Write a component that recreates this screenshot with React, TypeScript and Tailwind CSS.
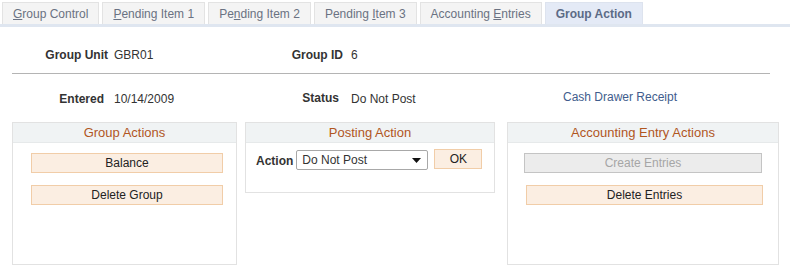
import React from "react";

function Tab({ children, active }: { children: React.ReactNode; active?: boolean }) {
  return (
    <div
      className={
        active
          ? "h-[22px] px-[10px] flex items-center bg-[#e4eaf6] border border-[#dde3ee] border-b-0 text-[#5b6b86] font-bold"
          : "h-[22px] px-[10px] flex items-center bg-[#f4f4f4] border border-[#e3e3e3] border-b-0 text-[#6a7282]"
      }
    >
      {children}
    </div>
  );
}

function Panel({
  title,
  width,
  height,
  children,
}: {
  title: string;
  width: string;
  height: string;
  children?: React.ReactNode;
}) {
  return (
    <div className={`${width} ${height} border border-[#e2e2e2] flex flex-col`}>
      <div className="h-[20px] bg-[#f0f3f4] border-b border-[#e6e9ea] flex items-center justify-center text-[13px] text-[#b1561f]">
        {title}
      </div>
      {children}
    </div>
  );
}

function OrangeButton({ children, className }: { children: React.ReactNode; className: string }) {
  return (
    <div
      className={`${className} h-[20px] bg-[#fbeee2] border border-[#f1cda8] flex items-center justify-center text-[#222]`}
    >
      {children}
    </div>
  );
}

export default function App() {
  return (
    <div className="w-[790px] h-[273px] bg-white font-['Liberation_Sans',Arial,sans-serif] text-[12px] text-[#333] overflow-hidden">
      {/* Tabs */}
      <div className="pt-[2px] pl-[2px] flex gap-[3px] border-b-[3px] border-[#dfe6f0]">
        <Tab>
          <span>
            <span className="underline">G</span>roup Control
          </span>
        </Tab>
        <Tab>
          <span>
            <span className="underline">P</span>ending Item 1
          </span>
        </Tab>
        <Tab>
          <span>
            Pe<span className="underline">n</span>ding Item 2
          </span>
        </Tab>
        <Tab>
          <span>
            Pending <span className="underline">I</span>tem 3
          </span>
        </Tab>
        <Tab>
          <span>
            Accounting <span className="underline">E</span>ntries
          </span>
        </Tab>
        <Tab active>Group Action</Tab>
      </div>

      {/* Header row */}
      <div className="mt-[20px] flex items-center h-[16px]">
        <div className="w-[108px] text-right font-bold">Group Unit</div>
        <div className="ml-[6px] w-[120px]">GBR01</div>
        <div className="w-[109px] text-right font-bold">Group ID</div>
        <div className="ml-[8px]">6</div>
      </div>

      <div className="mt-[10px] ml-[12px] w-[758px] border-t border-[#b4b4b4]" />

      <div className="mt-[17px] flex items-center h-[16px]">
        <div className="w-[104px] text-right font-bold">Entered</div>
        <div className="ml-[10px] w-[120px]">10/14/2009</div>
        <div className="w-[105px] text-right font-bold -mt-[2px]">Status</div>
        <div className="ml-[12px] w-[212px]">Do Not Post</div>
        <div className="text-[#3f5d8d] -mt-[4px]">Cash Drawer Receipt</div>
      </div>

      {/* Panels */}
      <div className="mt-[15px] flex items-start">
        <Panel title="Group Actions" width="ml-[12px] w-[225px]" height="h-[143px]">
          <div className="pt-[10px] pl-[18px] flex flex-col gap-[12px]">
            <OrangeButton className="w-[192px]">Balance</OrangeButton>
            <OrangeButton className="w-[192px]">Delete Group</OrangeButton>
          </div>
        </Panel>

        <Panel title="Posting Action" width="ml-[8px] w-[250px]" height="h-[71px]">
          <div className="pt-[6px] pl-[10px] flex items-start">
            <div className="font-bold mt-[3px]">Action</div>
            <div className="ml-[3px] mt-[1px] w-[132px] h-[20px] border border-[#a8a8a8] rounded-[2px] bg-white flex items-center pl-[5px] pr-[4px] justify-between">
              <span>Do Not Post</span>
              <svg width="9" height="5" viewBox="0 0 9 5" className="mr-[2px]">
                <polygon points="0,0 9,0 4.5,5" fill="#111" />
              </svg>
            </div>
            <OrangeButton className="ml-[6px] w-[48px]">OK</OrangeButton>
          </div>
        </Panel>

        <Panel title="Accounting Entry Actions" width="ml-[12px] w-[272px]" height="h-[143px]">
          <div className="pt-[10px] flex flex-col gap-[12px]">
            <div className="ml-[16px] w-[238px] h-[20px] bg-[#ececec] border border-[#c4c4c4] flex items-center justify-center text-[#a6a6a6]">
              Create Entries
            </div>
            <OrangeButton className="ml-[18px] w-[237px]">Delete Entries</OrangeButton>
          </div>
        </Panel>
      </div>
    </div>
  );
}
